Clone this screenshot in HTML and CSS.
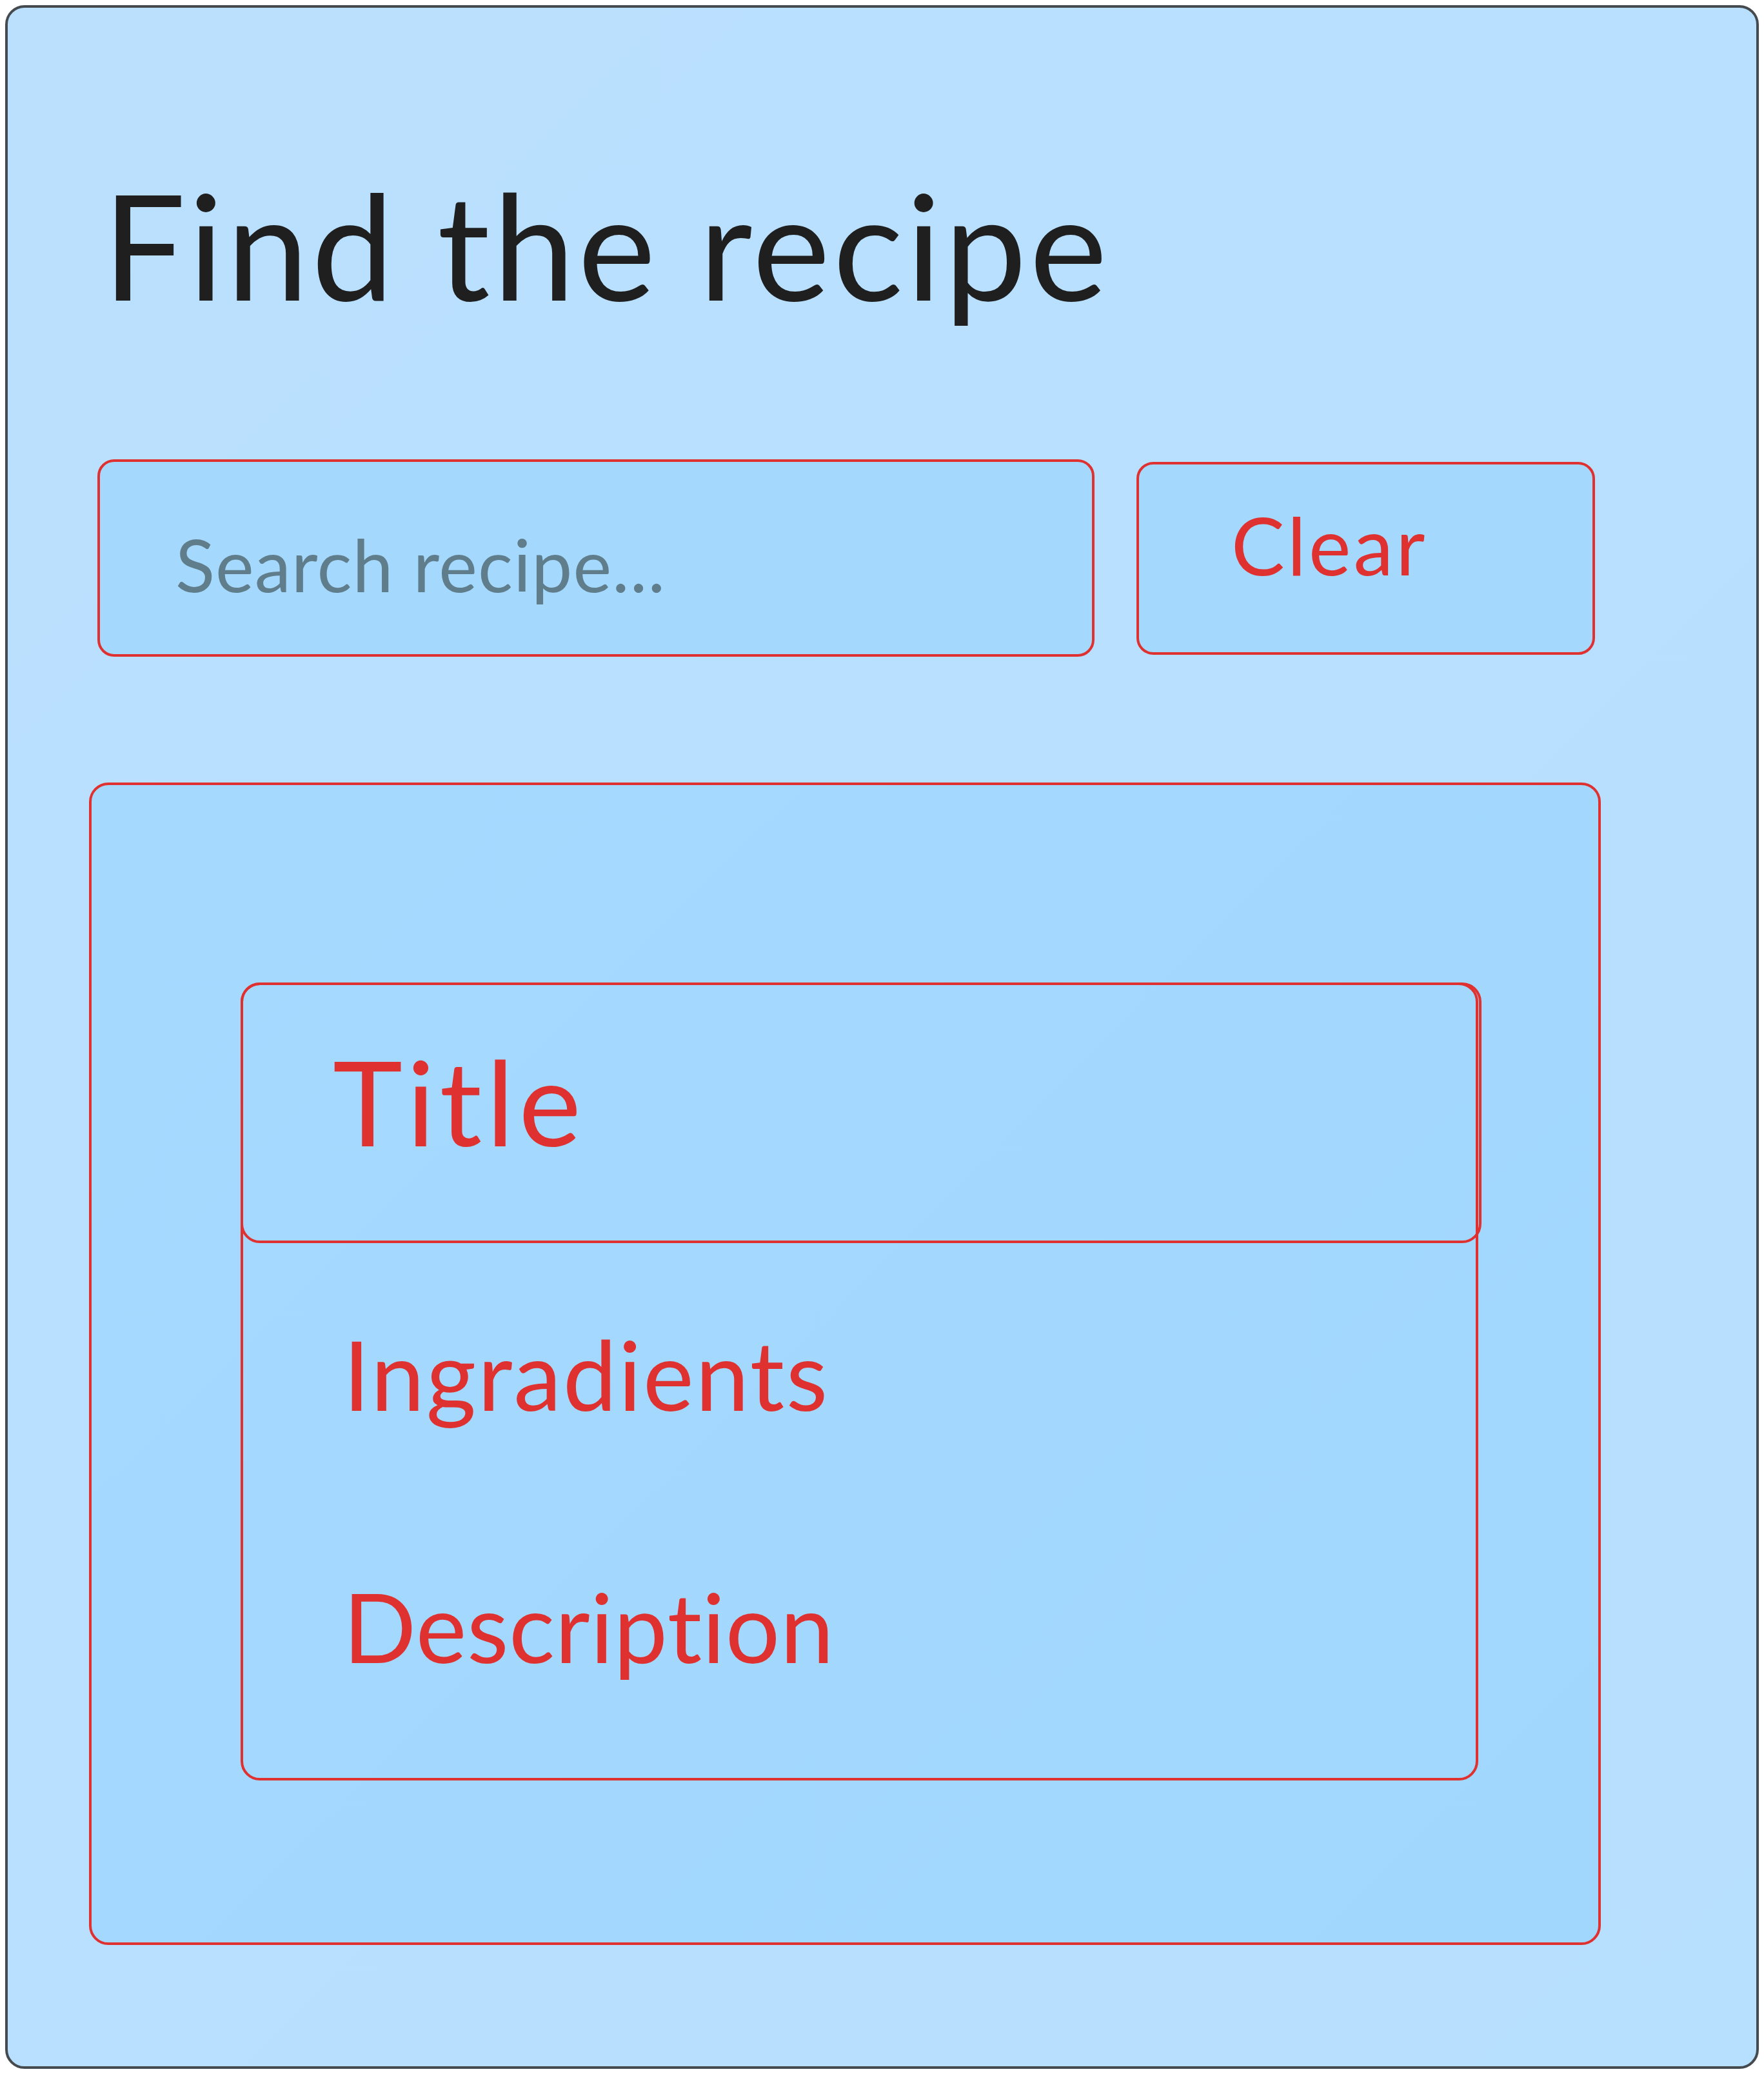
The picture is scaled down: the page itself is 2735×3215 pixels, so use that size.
FILE: index.html
```html
<!DOCTYPE html>
<html lang="en">
<head>
<meta charset="utf-8">
<title>Find the recipe</title>
<link rel="stylesheet" href="styles.css">
</head>
<body>
<div class="app">
  <h1 class="heading">Find the recipe</h1>
  <div class="search-row">
    <input class="search-input" type="text" placeholder="Search recipe...">
    <button class="clear-btn" type="button">Clear</button>
  </div>
  <div class="results">
    <div class="card">
      <div class="card-header">Title</div>
      <div class="card-body">
        <div class="card-line ingredients">Ingradients</div>
        <div class="card-line description">Description</div>
      </div>
    </div>
  </div>
</div>
</body>
</html>
```

FILE: styles.css
```css
* { box-sizing: border-box; }

html, body { background: #ffffff; }

body {
  margin: 8px;
  font-family: "Lato", "Noto Sans", sans-serif;
  font-variant-ligatures: none;
  font-feature-settings: "liga" 0, "clig" 0;
}

.app {
  height: 3199px;
  border: 4px solid #454a4f;
  border-radius: 30px;
  background: linear-gradient(135deg, #bae0fe 0%, #b7dffe 100%);
  padding: 252px 0 0 126px;
}

.heading {
  margin: 0 0 0 21px;
  font-size: 228px;
  line-height: 229px;
  font-weight: 400;
  letter-spacing: 4.5px;
  color: #1f1f1f;
}

.search-row {
  display: flex;
  align-items: center;
  gap: 65px;
  margin: 219px 0 0 13px;
}

.search-input {
  width: 1546px;
  height: 306px;
  border: 4px solid #e03131;
  border-radius: 26px;
  background: #a4d8fd;
  padding: 18px 0 0 117px;
  font-family: "Lato", "Noto Sans", sans-serif;
  font-size: 113px;
  letter-spacing: 1px;
  color: #1f1f1f;
  outline: none;
}

.search-input::placeholder {
  color: #607d8b;
  opacity: 1;
}

.clear-btn {
  width: 711px;
  height: 299px;
  border: 4px solid #e03131;
  border-radius: 26px;
  background: #a4d8fd;
  padding: 62px 0 0 143px;
  text-align: left;
  display: flex;
  align-items: flex-start;
  font-family: "Lato", "Noto Sans", sans-serif;
  font-size: 124px;
  line-height: 124px;
  letter-spacing: 4px;
  color: #e03131;
  cursor: pointer;
}

.results {
  width: 2344px;
  height: 1802px;
  margin-top: 195px;
  border: 4px solid #e03131;
  border-radius: 30px;
  background: linear-gradient(135deg, #a5d9fe 0%, #a2d7fd 100%);
  padding: 306px 0 0 231px;
}

.card {
  width: 1919px;
  height: 1237px;
  border: 4px solid #e03131;
  border-radius: 30px;
}

.card-header {
  width: 1924px;
  height: 404px;
  margin: -4px 0 0 -4px;
  border: 4px solid #e03131;
  border-radius: 30px;
  padding: 88px 0 0 139px;
  font-size: 183px;
  line-height: 183px;
  letter-spacing: 7px;
  color: #e03131;
}

.card-body {
  padding: 128px 0 0 155px;
}

.card-line {
  font-size: 149px;
  line-height: 149px;
  color: #e03131;
}

.ingredients {
  letter-spacing: 2.5px;
}

.description {
  margin-top: 242px;
  letter-spacing: 0.5px;
}
```
